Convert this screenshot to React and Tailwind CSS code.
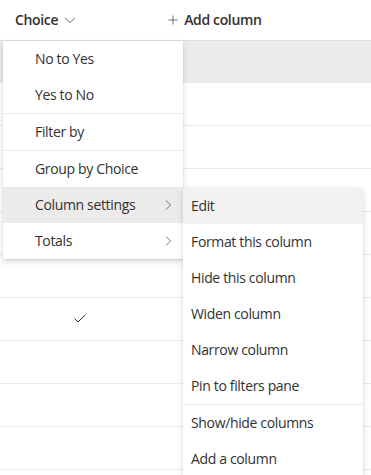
const font = { fontFamily: '"Open Sans", "Noto Sans", sans-serif' };

function ChevronRight() {
  return (
    <svg width="12" height="12" viewBox="0 0 12 12" fill="none" className="text-[#605e5c]">
      <path d="M4 1.5L8.5 6L4 10.5" stroke="currentColor" strokeWidth="0.9" />
    </svg>
  );
}

function MenuItem({ label, active, sub, light }) {
  return (
    <div
      className={`flex h-9 items-center justify-between pr-[9px] ${
        active ? (light ? "bg-[#f3f2f1]" : "bg-[#edebe9]") : ""
      }`}
    >
      <span className={light ? "pl-2" : "pl-8"}>{label}</span>
      {sub && <ChevronRight />}
    </div>
  );
}

const Divider = () => <div className="h-px bg-[#edebe9]" />;

export default function App() {
  const rows = Array.from({ length: 9 });
  return (
    <div
      className="relative h-[475px] w-[371px] overflow-hidden bg-white text-sm tracking-[-0.35px] text-[#323130]"
      style={font}
    >
      {/* header */}
      <div className="flex h-[41px] items-center border-b border-[#e1dfdd] font-semibold">
        <div className="flex items-center gap-[6px] pl-[15px]">
          <span>Choice</span>
          <svg width="12" height="12" viewBox="0 0 12 12" fill="none" className="text-[#605e5c]">
            <path d="M1 4L6 8.5L11 4" stroke="currentColor" strokeWidth="0.9" />
          </svg>
        </div>
        <div className="ml-[92px] flex items-center gap-[6px]">
          <svg width="10" height="10" viewBox="0 0 10 10" fill="none" className="text-[#605e5c]">
            <path d="M5 0.5V9.5M0.5 5H9.5" stroke="currentColor" strokeWidth="0.9" />
          </svg>
          <span>Add column</span>
        </div>
      </div>

      {/* rows */}
      <div className="h-[42px] bg-[#edebe9]" />
      {rows.map((_, i) => (
        <div key={i} className="flex h-[43px] items-center border-b border-[#edebe9]">
          {i === 5 && (
            <svg width="14" height="12" viewBox="0 0 14 12" fill="none" className="mb-[3px] ml-[73px]">
              <path d="M1.5 6.5L5 10L12.5 2.5" stroke="#323130" strokeWidth="1" />
            </svg>
          )}
        </div>
      ))}

      {/* context menu */}
      <div className="absolute left-[3px] top-[41px] w-[180px] bg-white shadow-[0_3.2px_7.2px_rgba(0,0,0,0.13),0_0.6px_1.8px_rgba(0,0,0,0.11)]">
        <MenuItem label="No to Yes" />
        <MenuItem label="Yes to No" />
        <Divider />
        <MenuItem label="Filter by" />
        <Divider />
        <MenuItem label="Group by Choice" />
        <MenuItem label="Column settings" active sub />
        <MenuItem label="Totals" sub />
      </div>

      {/* submenu */}
      <div className="absolute left-[183px] top-[188px] w-[180px] overflow-hidden rounded-tr-[4px] bg-white shadow-[0_3.2px_7.2px_rgba(0,0,0,0.13),0_0.6px_1.8px_rgba(0,0,0,0.11)]">
        <MenuItem label="Edit" active light />
        <MenuItem label="Format this column" light />
        <MenuItem label="Hide this column" light />
        <MenuItem label="Widen column" light />
        <MenuItem label="Narrow column" light />
        <MenuItem label="Pin to filters pane" light />
        <Divider />
        <MenuItem label="Show/hide columns" light />
        <MenuItem label="Add a column" light />
      </div>
    </div>
  );
}
